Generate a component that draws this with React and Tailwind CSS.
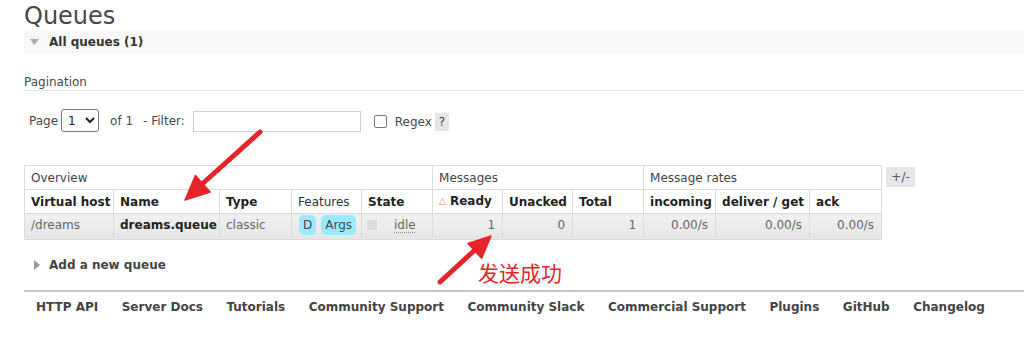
export default function App() {
  const cell = "border border-[#dcdcdc] px-[6px] py-0 text-left align-middle whitespace-nowrap";
  const dataCell = "border border-[#dcdcdc] px-[6px] pt-0 pb-[3px] align-middle whitespace-nowrap bg-[linear-gradient(#f1f1f1,#e5e5e5)]";
  const links = [
    "HTTP API",
    "Server Docs",
    "Tutorials",
    "Community Support",
    "Community Slack",
    "Commercial Support",
    "Plugins",
    "GitHub",
    "Changelog",
  ];
  return (
    <div className="relative w-[1024px] h-[347px] overflow-hidden bg-white font-['DejaVu_Sans',Verdana,sans-serif] text-[12px] leading-[16px] text-[#484848]">
      <div className="pl-[24px]">
        <h1 className="text-[24px] leading-[28px] pt-[2px] font-normal text-[#484848]">Queues</h1>
        <div className="h-[24px] bg-[#f7f7f7] flex items-center">
          <svg width="9" height="6" viewBox="0 0 9 6" className="ml-[6px]">
            <polygon points="0,0 9,0 4.5,6" fill="#aaaaaa" />
          </svg>
          <span className="ml-[10px] font-bold text-[#333]">All queues (1)</span>
        </div>

        <div className="mt-[20px] h-[17px] border-b border-[#e4e4e4]">Pagination</div>

        <div className="mt-[18px] h-[23px] flex items-center pl-[5px]">
          <span>Page</span>
          <div className="ml-[3px] w-[38px] h-[23px] border border-[#767676] rounded-[3px] flex items-center bg-white">
            <span className="ml-[6px] text-[#222]">1</span>
            <svg width="10" height="7" viewBox="0 0 10 7" className="ml-[9px]">
              <polyline points="1,1 5,5 9,1" fill="none" stroke="#222" strokeWidth="2" />
            </svg>
          </div>
          <span className="ml-[11px]">of 1</span>
          <span className="ml-[10px]">- Filter:</span>
          <div className="ml-[8px] w-[168px] h-[21px] border border-[#cfcfcf] bg-white mt-[2px]"></div>
          <div className="ml-[13px] w-[13px] h-[13px] border border-[#767676] rounded-[2px] bg-white mt-[2px]"></div>
          <span className="ml-[8px] mt-[2px]">Regex</span>
          <span className="ml-[3px] w-[14px] h-[18px] bg-[#e6e6e6] flex items-center justify-center mt-[2px]">?</span>
        </div>

        <div className="mt-[33px] flex items-start">
          <table className="border-collapse table-fixed w-[857px]">
            <colgroup>
              <col className="w-[89px]" />
              <col className="w-[106px]" />
              <col className="w-[72px]" />
              <col className="w-[70px]" />
              <col className="w-[71px]" />
              <col className="w-[70px]" />
              <col className="w-[70px]" />
              <col className="w-[71px]" />
              <col className="w-[72px]" />
              <col className="w-[94px]" />
              <col className="w-[72px]" />
            </colgroup>
            <tbody>
              <tr className="h-[24px] text-[#444]">
                <td className={cell} colSpan={5}>Overview</td>
                <td className={cell} colSpan={3}>Messages</td>
                <td className={cell} colSpan={3}>Message rates</td>
              </tr>
              <tr className="h-[24px] text-[#222]">
                <td className={cell + " font-bold"}>Virtual host</td>
                <td className={cell + " font-bold"}>Name</td>
                <td className={cell + " font-bold"}>Type</td>
                <td className={cell + " text-[#333]"}>Features</td>
                <td className={cell + " font-bold"}>State</td>
                <td className={cell + " font-bold"}>
                  <span className="text-[#f07a3c] text-[9px] mr-[4px] relative top-[-1px]">△</span>Ready
                </td>
                <td className={cell + " font-bold"}>Unacked</td>
                <td className={cell + " font-bold"}>Total</td>
                <td className={cell + " font-bold"}>incoming</td>
                <td className={cell + " font-bold"}>deliver / get</td>
                <td className={cell + " font-bold"}>ack</td>
              </tr>
              <tr className="h-[26px] text-[#666]">
                <td className={dataCell}>/dreams</td>
                <td className={dataCell + " font-bold text-[#222]"}>dreams.queue</td>
                <td className={dataCell}>classic</td>
                <td className={dataCell + " pl-[7px]"}>
                  <span className="inline-block px-[4px] py-[2px] rounded-[5px] bg-[#99ebff] text-[#444]">D</span>
                  <span className="inline-block ml-[5px] px-[4px] py-[2px] rounded-[5px] bg-[#99ebff] text-[#444]">Args</span>
                </td>
                <td className={dataCell + " pl-[5px]"}>
                  <span className="inline-flex items-center">
                    <span className="inline-block w-[10px] h-[10px] bg-[#dddddd]"></span>
                    <span className="ml-[17px] underline decoration-dotted decoration-[#888] underline-offset-[3px]">idle</span>
                  </span>
                </td>
                <td className={dataCell + " text-right pr-[7px]"}>1</td>
                <td className={dataCell + " text-right pr-[7px]"}>0</td>
                <td className={dataCell + " text-right pr-[7px]"}>1</td>
                <td className={dataCell + " text-right pr-[7px]"}>0.00/s</td>
                <td className={dataCell + " text-right pr-[7px]"}>0.00/s</td>
                <td className={dataCell + " text-right pr-[7px]"}>0.00/s</td>
              </tr>
            </tbody>
          </table>
          <div className="ml-[4px] mt-[2px] w-[29px] h-[20px] bg-[#e6e6e6] flex items-center justify-center text-[#555]">+/-</div>
        </div>

        <div className="mt-[17px] h-[16px] flex items-center">
          <svg width="6" height="10" viewBox="0 0 6 10" className="ml-[10px]">
            <polygon points="0,0 6,5 0,10" fill="#999999" />
          </svg>
          <span className="ml-[9px] font-bold text-[#444]">Add a new queue</span>
        </div>

        <div className="mt-[17px] border-t-2 border-[#c2c2c2] pt-[7px] flex gap-[23.5px] pl-[12px] font-bold text-[#444]">
          {links.map((l) => (
            <span key={l}>{l}</span>
          ))}
        </div>
      </div>

      <svg className="absolute left-0 top-0 pointer-events-none" width="1024" height="347" viewBox="0 0 1024 347">
        <line x1="260" y1="132" x2="201" y2="185" stroke="#e8242b" strokeWidth="5" strokeLinecap="round" />
        <polygon points="185,200 210.2,192 195.4,175.6" fill="#e8242b" stroke="#e8242b" strokeWidth="1.5" strokeLinejoin="round" />
        <line x1="440" y1="282" x2="477" y2="248" stroke="#e8242b" strokeWidth="5" strokeLinecap="round" />
        <polygon points="491,236 481.6,258.3 468,243.5" fill="#e8242b" stroke="#e8242b" strokeWidth="1.5" strokeLinejoin="round" />
      </svg>
      <div className="absolute left-[478px] top-[261px] text-[21px] leading-[22px] text-[#e8242b] font-['Noto_Sans_CJK_SC',sans-serif]">发送成功</div>
    </div>
  );
}
